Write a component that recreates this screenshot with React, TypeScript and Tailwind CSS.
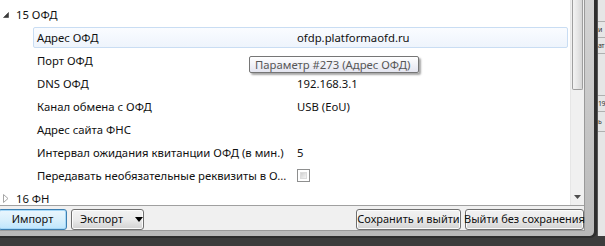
import React from "react";

const rows: { label: string; value?: string; checkbox?: boolean; selected?: boolean }[] = [
  { label: "Адрес ОФД", value: "ofdp.platformaofd.ru", selected: true },
  { label: "Порт ОФД" },
  { label: "DNS ОФД", value: "192.168.3.1" },
  { label: "Канал обмена с ОФД", value: "USB (EoU)" },
  { label: "Адрес сайта ФНС" },
  { label: "Интервал ожидания квитанции ОФД (в мин.)", value: "5" },
  { label: "Передавать необязательные реквизиты в О...", checkbox: true },
];

function Row({ r }: { r: (typeof rows)[number] }) {
  return (
    <div className="h-[23px] pl-[33px] pr-[2px] flex items-center">
      <div
        className={
          "h-[21px] w-full flex items-center rounded-[2px] border " +
          (r.selected
            ? "border-[#c9ddf3] bg-gradient-to-b from-[#fafcff] to-[#eef4fc]"
            : "border-transparent")
        }
      >
        <div className="w-[263px] shrink-0 pl-[3px] whitespace-nowrap leading-[16px]">{r.label}</div>
        {r.value && <div className="whitespace-nowrap leading-[16px]">{r.value}</div>}
        {r.checkbox && (
          <div className="w-[13px] h-[13px] border border-[#8e8f8f] bg-white p-[2px]">
            <div className="w-full h-full bg-gradient-to-br from-[#d0d0d0] to-[#f4f4f4] border border-[#dcdcdc]" />
          </div>
        )}
      </div>
    </div>
  );
}

function GroupRow({ label, open }: { label: string; open: boolean }) {
  return (
    <div className="h-[23px] flex items-center">
      <div className="w-[16px] pl-[3px] flex items-center">
        {open ? (
          <svg width="6" height="6" viewBox="0 0 6 6">
            <path d="M5.5 0.5 L5.5 5.5 L0.5 5.5 Z" fill="#3a3a3a" stroke="#3a3a3a" strokeWidth="0.6" />
          </svg>
        ) : (
          <svg width="6" height="9" viewBox="0 0 6 9">
            <path d="M0.5 0.5 L5 4.5 L0.5 8.5 Z" fill="white" stroke="#a6a6a6" />
          </svg>
        )}
      </div>
      <div className="whitespace-nowrap leading-[16px]">{label}</div>
    </div>
  );
}

function Btn({ children, className = "", focus = false }: { children: React.ReactNode; className?: string; focus?: boolean }) {
  return (
    <div
      className={
        "h-[21px] shrink-0 flex items-center justify-center rounded-[3px] border whitespace-nowrap text-[11px] leading-[16px] " +
        (focus
          ? "border-[#3c7fb1] bg-gradient-to-b from-[#eaf6fd] via-[#d9f0fc] to-[#bee6fd] shadow-[inset_0_0_0_1px_#a6d8f7]"
          : "border-[#707070] bg-gradient-to-b from-[#f2f2f2] via-[#ebebeb] to-[#d2d2d2] shadow-[inset_0_0_0_1px_#fcfcfc]") +
        " " +
        className
      }
    >
      {children}
    </div>
  );
}

export default function App() {
  return (
    <div className="w-[605px] h-[246px] overflow-hidden bg-[#3c3c3c] flex font-['Noto_Sans',sans-serif] text-[11.3px] text-[#111] leading-none">
      {/* main window */}
      <div className="w-[597px] h-[238px] flex flex-col rounded-br-[7px] bg-gradient-to-b from-[#d4d4d4] to-[#b9b9b9] border-r-[3px] border-b-[2px] border-[#2e2e2e] shrink-0">
        <div className="flex">
          {/* client */}
          <div className="w-[585px] h-[231px] flex flex-col shrink-0 border-r border-b border-[#9a9a9a]">
            <div className="h-[205px] flex overflow-hidden relative">
              <div className="w-[570px] bg-white pt-[3px] shrink-0">
                <GroupRow label="15 ОФД" open />
                {rows.map((r) => (
                  <Row key={r.label} r={r} />
                ))}
                <GroupRow label="16 ФН" open={false} />
              </div>
              {/* scrollbar */}
              <div className="w-[15px] bg-[#f0f0f0] flex flex-col border-l border-[#e6e6e6]">
                <div className="h-[90px] mx-[1px] rounded-b-[2px] border border-[#9e9e9e] border-t-0 bg-gradient-to-r from-[#f3f3f3] via-[#e6e6e6] to-[#d6d6d6]" />
                <div className="flex-1" />
                <div className="h-[17px] flex items-center justify-center">
                  <svg width="7" height="4" viewBox="0 0 7 4">
                    <path d="M0 0 L7 0 L3.5 4 Z" fill="#4d4d4d" />
                  </svg>
                </div>
              </div>
              {/* tooltip */}
              <div className="absolute left-[249px] top-[56px] h-[17px] w-[170px] border border-[#767676] rounded-[2px] bg-gradient-to-b from-[#ffffff] to-[#e4e5f0] shadow-[2px_2px_2px_rgba(0,0,0,0.35)] flex items-center pl-[5px] text-[#575757] whitespace-nowrap leading-[14px]">
                Параметр #273 (Адрес ОФД)
              </div>
            </div>
            {/* button bar */}
            <div className="flex-1 bg-[#f0f0f0] border-t border-[#a0a0a0] flex items-center pt-[2px]">
              <Btn focus className="w-[69px] ml-[-2px]">Импорт</Btn>
              <Btn className="w-[73px] ml-[4px] justify-start pl-[8px]">
                <span>Экспорт</span>
                <svg width="8" height="5" viewBox="0 0 8 5" className="ml-[12px] shrink-0">
                  <path d="M0 0 L8 0 L4 5 Z" fill="#000" />
                </svg>
              </Btn>
              <div className="flex-1" />
              <Btn className="w-[105px]">Сохранить и выйти</Btn>
              <Btn className="w-[119px] ml-[4px]">Выйти без сохранения</Btn>
            </div>
          </div>
          <div className="flex-1" />
        </div>
      </div>
      {/* background window strip */}
      <div className="flex-1 h-[236px] bg-[#e6e6e6] flex flex-col text-[7px] text-[#333] border-l border-[#555] overflow-hidden leading-[10px] tracking-[-0.5px]">
        <div className="h-[22px] border-b border-[#b0b0b0]" />
        <div className="h-[16px] border-b border-[#b0b0b0] flex items-center">и</div>
        <div className="h-[16px] border-b border-[#b0b0b0] flex items-center">ат</div>
        <div className="h-[42px] border-b border-[#b0b0b0]" />
        <div className="h-[16px] border-b border-[#b0b0b0] flex items-center">19</div>
        <div className="h-[20px] border-b border-[#b0b0b0] flex items-center">ь</div>
        <div className="flex-1" />
      </div>
    </div>
  );
}
